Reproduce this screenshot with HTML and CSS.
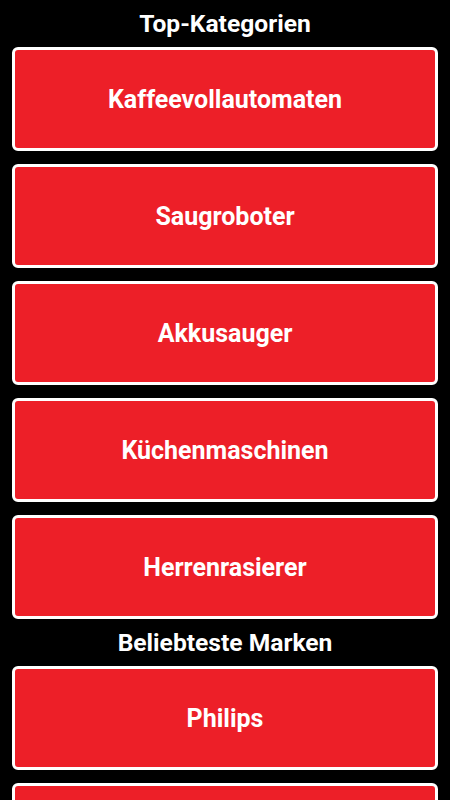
FILE: index.html
```html
<!DOCTYPE html>
<html>
<head>
    <title>Top-Kategorien</title>
    <link rel="stylesheet" href="styles.css">
</head>
<body>
    <h2 class="section-title">Top-Kategorien</h2>
    <div class="tile-list">
        <a class="tile" href="#">Kaffeevollautomaten</a>
        <a class="tile" href="#">Saugroboter</a>
        <a class="tile" href="#">Akkusauger</a>
        <a class="tile" href="#">Küchenmaschinen</a>
        <a class="tile" href="#">Herrenrasierer</a>
    </div>

    <h2 class="section-title">Beliebteste Marken</h2>
    <div class="tile-list">
        <a class="tile" href="#">Philips</a>
        <a class="tile" href="#"></a>
    </div>
</body>
</html>
```

FILE: styles.css
```css
body { margin: 0; background: #000; font-family: Roboto, "Liberation Sans", sans-serif; color: #fff; }
.section-title { margin: 0; height: 47px; line-height: 47px; text-align: center; font-size: 24.6px; font-weight: bold; }
.tile-list { display: flex; flex-direction: column; gap: 13px; padding: 0 12px; }
.tile { display: flex; align-items: center; justify-content: center; height: 104px; box-sizing: border-box; background: #ed1f28; border: 3px solid #fff; border-radius: 6px; color: #fff; text-decoration: none; font-size: 25px; font-weight: bold; }
```
